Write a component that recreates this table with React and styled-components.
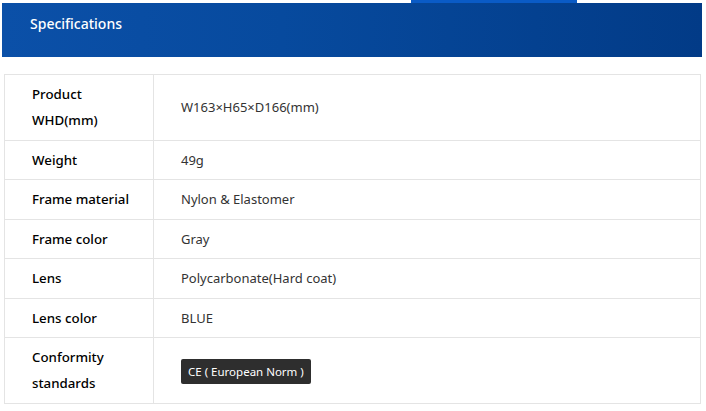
import React from "react";
import styled, { createGlobalStyle } from "styled-components";

const Global = createGlobalStyle`
  html, body { margin: 0; padding: 0; background: #fff; }
  body { font-family: "Noto Sans", "Open Sans", "Noto Sans CJK SC", sans-serif; }
`;

const Page = styled.div`
  width: 706px;
  padding: 0 4px 0 2px;
  box-sizing: border-box;
`;

const TabStrip = styled.div`
  display: flex;
  height: 3px;
  padding-left: 409px;
`;

const ActiveTab = styled.div`
  width: 166px;
  background: #0a5bc6;
`;

const Header = styled.div`
  height: 54px;
  box-sizing: border-box;
  padding: 10px 0 0 28px;
  background: linear-gradient(90deg, #0b50a8 0%, #074a9e 40%, #023b87 100%);
  color: #fff;
  font-size: 14px;
  font-weight: 500;
  line-height: 22px;
`;

const Table = styled.table`
  margin: 17px 0 0 2px;
  width: 697px;
  border-collapse: collapse;
  font-size: 13px;
  line-height: 26px;
`;

const Row = styled.tr`
  border: 1px solid #e4e4e4;
`;

const Label = styled.th`
  width: 149px;
  box-sizing: border-box;
  padding: 6px 10px 6.5px 27px;
  text-align: left;
  font-size: 13.3px;
  font-weight: 500;
  color: #000;
  border-right: 1px solid #e4e4e4;
  vertical-align: middle;
`;

const Value = styled.td`
  padding: 6px 20px 6.5px 27px;
  color: #333;
  vertical-align: middle;
`;

const Badge = styled.span`
  display: inline-flex;
  align-items: center;
  height: 25px;
  padding: 0 7px;
  border-radius: 2px;
  background: #2e2e2e;
  color: #fff;
  font-size: 11.5px;
  line-height: 25px;
  vertical-align: middle;
`;

const rows = [
  { label: ["Product", "WHD(mm)"], value: "W163×H65×D166(mm)" },
  { label: ["Weight"], value: "49g" },
  { label: ["Frame material"], value: "Nylon & Elastomer" },
  { label: ["Frame color"], value: "Gray" },
  { label: ["Lens"], value: "Polycarbonate(Hard coat)" },
  { label: ["Lens color"], value: "BLUE" },
  { label: ["Conformity", "standards"], badge: "CE ( European Norm )" },
];

export default function App() {
  return (
    <Page>
      <Global />
      <TabStrip>
        <ActiveTab />
      </TabStrip>
      <Header>Specifications</Header>
      <Table>
        <tbody>
          {rows.map((r, i) => (
            <Row key={i}>
              <Label>
                {r.label.map((l, j) => (
                  <div key={j}>{l}</div>
                ))}
              </Label>
              <Value>{r.badge ? <Badge>{r.badge}</Badge> : r.value}</Value>
            </Row>
          ))}
        </tbody>
      </Table>
    </Page>
  );
}
